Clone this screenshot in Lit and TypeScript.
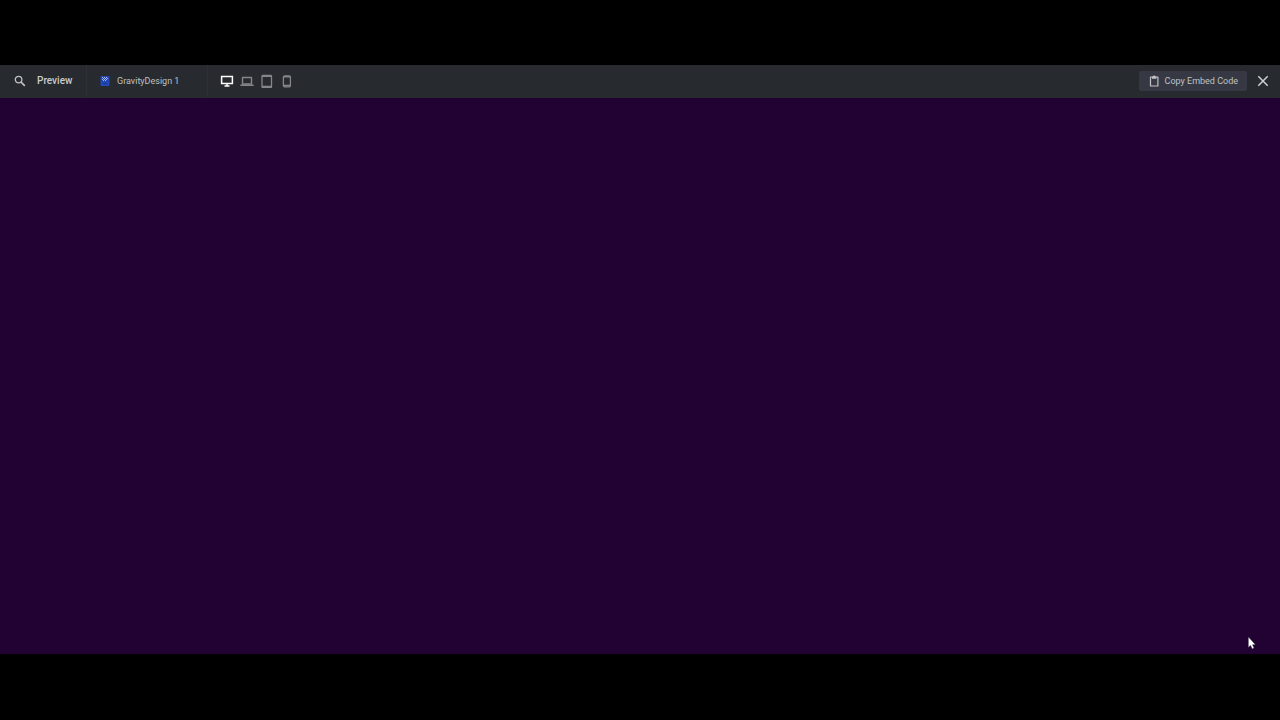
import { LitElement, html, css, svg } from "lit";
import { customElement, state } from "lit/decorators.js";

const devices = [
  {
    id: "desktop",
    label: "Desktop",
    art: svg`<path d="M1.6 2.6h10.8v7H1.6z M7 9.5v2.5 M4.5 12h5" fill="none" stroke="currentColor" stroke-width="1.5"/>`,
  },
  {
    id: "laptop",
    label: "Laptop",
    art: svg`<path d="M2.5 3.5h9v6.5h-9z" fill="none" stroke="currentColor" stroke-width="1.4" stroke-linejoin="round"/><path d="M.3 10.5h13.4v1.5H.3z" fill="currentColor"/>`,
  },
  {
    id: "tablet",
    label: "Tablet",
    art: svg`<rect x="2" y="1.5" width="9.5" height="12" rx=".8" fill="none" stroke="currentColor" stroke-width="1.3"/><path d="M2 2.4h10 M2 12.4h10" stroke="currentColor" stroke-width="1.2"/>`,
  },
  {
    id: "phone",
    label: "Phone",
    art: svg`<rect x="3.4" y="2" width="7" height="10.8" rx="1.2" fill="none" stroke="currentColor" stroke-width="1.3"/><path d="M3.5 2.8h7 M3.5 11.4h7" stroke="currentColor" stroke-width="1.5"/>`,
  },
];

@customElement("app-root")
export class AppRoot extends LitElement {
  @state() private device = "desktop";

  static styles = css`
    :host {
      display: flex;
      flex-direction: column;
      box-sizing: border-box;
      min-height: 100vh;
      padding: 65px 0 66px;
      background: #000;
      color: #bfc1c4;
      font: 9px/12px Roboto, sans-serif;
    }
    button {
      display: flex;
      align-items: center;
      justify-content: center;
      margin: 0;
      padding: 0;
      border: 0;
      background: none;
      color: inherit;
      font: inherit;
      cursor: pointer;
    }
    svg {
      display: block;
      flex: none;
    }
    .bar {
      display: flex;
      align-items: stretch;
      height: 32px;
      border-bottom: 1px solid #272a2e;
      background: #272a2e;
    }
    .title,
    .project {
      display: flex;
      align-items: center;
      box-sizing: border-box;
      border-right: 1px solid #2d3034;
    }
    .title {
      gap: 10px;
      width: 87px;
      padding-left: 13px;
    }
    .title h1 {
      margin: 0;
      color: #c9cbce;
      font-size: 10px;
      line-height: 12px;
      font-weight: 500;
    }
    .project {
      gap: 7px;
      width: 121px;
      padding-left: 13px;
    }
    .devices {
      display: flex;
      align-items: center;
      gap: 6px;
      padding-left: 12px;
      color: #85868a;
    }
    .active {
      color: #fff;
    }
    .actions {
      display: flex;
      align-items: center;
      gap: 9px;
      margin-left: auto;
      padding-right: 10px;
    }
    .copy {
      gap: 5px;
      height: 20px;
      padding: 0 9px;
      border-radius: 2px;
      background: #363943;
    }
    .stage {
      position: relative;
      flex: 1;
      background: #220133;
    }
    .pointer {
      position: absolute;
      right: 24px;
      bottom: 4px;
    }
  `;

  render() {
    return html`
      <header class="bar">
        <div class="title">
          <svg width="14" height="14" viewBox="0 0 14 14" aria-hidden="true">
            <circle cx="5.6" cy="5.6" r="3.3" fill="none" stroke="#bfc1c4" stroke-width="1.3" />
            <path d="M8 8l3.8 3.8" stroke="#bfc1c4" stroke-width="1.7" />
          </svg>
          <h1>Preview</h1>
        </div>
        <div class="project">
          <svg width="10" height="10" viewBox="0 0 10 10" aria-hidden="true">
            <rect x=".5" y="0" width="9" height="10" rx="1" fill="#2148b5" />
            <path
              d="M2 1h1v1H2zM4 1h1v1H4zM6 1h1v1H6zM3 2h1v1H3zM5 2h1v1H5zM7 2h1v1H7zM2 3h1v1H2zM4 3h1v1H4zM6 3h1v1H6zM3 4h1v1H3zM5 4h1v1H5z"
              fill="#a3b5ec"
            />
            <path d="M3 7h4v1H3z" fill="#17358b" />
          </svg>
          <span>GravityDesign 1</span>
        </div>
        <nav class="devices" aria-label="Preview size">
          ${devices.map(
            (d) => html`<button
              class=${d.id === this.device ? "active" : ""}
              aria-label=${d.label}
              aria-pressed=${d.id === this.device ? "true" : "false"}
              @click=${() => (this.device = d.id)}
            >
              <svg width="14" height="14" viewBox="0 0 14 14" aria-hidden="true">${d.art}</svg>
            </button>`
          )}
        </nav>
        <div class="actions">
          <button class="copy">
            <svg width="12" height="12" viewBox="0 0 12 12" aria-hidden="true">
              <path d="M2.5 2h7.4v9H2.5z" fill="none" stroke="currentColor" stroke-width="1.2" stroke-linejoin="round" />
              <path d="M4 1.5h1.1a1.1 1.1 0 0 1 2.2 0h1.1v2.2H4z" fill="currentColor" />
            </svg>
            <span>Copy Embed Code</span>
          </button>
          <button aria-label="Close">
            <svg width="14" height="14" viewBox="0 0 14 14" aria-hidden="true">
              <path d="M2.3 2.3l9.4 9.4M11.7 2.3l-9.4 9.4" stroke="#cfd0d2" stroke-width="1.5" />
            </svg>
          </button>
        </div>
      </header>
      <main class="stage">
        <svg class="pointer" width="9" height="14" viewBox="0 0 9 14" aria-hidden="true">
          <path d="M1.3 .8v10.6l2.3-2 1.5 3.5 2-.9-1.5-3.3h2.9z" fill="#fff" stroke="#100018" stroke-width=".4" />
        </svg>
      </main>
    `;
  }
}
